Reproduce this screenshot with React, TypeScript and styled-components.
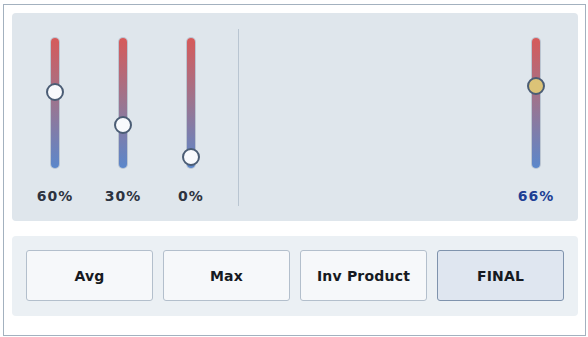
import React from "react";
import styled, { createGlobalStyle } from "styled-components";

const Global = createGlobalStyle`
  html, body { margin: 0; padding: 0; background: #ffffff; }
  body { font-family: "DejaVu Sans", Verdana, sans-serif; }
`;

const Frame = styled.div`
  box-sizing: border-box;
  margin: 4px 0 0 3px;
  width: 583px;
  height: 332px;
  border: 1px solid #a3b1bf;
  background: #ffffff;
  padding: 8px 7px 8px 8px;
  display: flex;
  flex-direction: column;
  gap: 15px;
`;

const SliderPanel = styled.div`
  box-sizing: border-box;
  height: 208px;
  background: #dfe6ec;
  border-radius: 4px;
  padding: 16px 18px 15px 19px;
  display: flex;
  align-items: stretch;
`;

const Group = styled.div`
  display: flex;
  gap: 20px;
`;

const Divider = styled.div`
  width: 1px;
  background: #b9c5d1;
  margin: 0 24px 0 23px;
`;

const RightArea = styled.div`
  flex: 1;
  display: flex;
  justify-content: flex-end;
`;

const Column = styled.div`
  width: 48px;
  display: flex;
  flex-direction: column;
  align-items: center;
  padding-top: 9px;
`;

const Track = styled.div`
  position: relative;
  box-sizing: border-box;
  width: 8px;
  height: 130px;
  border-radius: 4px;
  background: linear-gradient(to bottom, #d65a5a 0%, #9b7590 50%, #5b87cb 100%);
  box-shadow: 0 0 0 1px rgba(120, 135, 160, 0.35);
`;

const Thumb = styled.div<{ $accent?: boolean }>`
  position: absolute;
  left: 50%;
  box-sizing: border-box;
  width: 18px;
  height: 18px;
  margin-left: -9px;
  border-radius: 50%;
  border: 2px solid #4b5d75;
  background: ${(p) => (p.$accent ? "#dcc377" : "#f8fafd")};
`;

const Value = styled.div<{ $accent?: boolean }>`
  margin-top: 20px;
  font-family: "DejaVu Sans", Verdana, sans-serif;
  font-weight: 700;
  font-size: 14px;
  letter-spacing: 1px;
  line-height: 17px;
  color: ${(p) => (p.$accent ? "#1d3f94" : "#2d3340")};
  white-space: nowrap;
`;

const ButtonPanel = styled.div`
  box-sizing: border-box;
  height: 80px;
  background: #ebf0f4;
  border-radius: 4px;
  padding: 14px 13px 15px 14px;
  display: grid;
  grid-template-columns: repeat(4, 127px);
  gap: 10px;
`;

const Button = styled.button<{ $active?: boolean }>`
  box-sizing: border-box;
  height: 51px;
  border-radius: 3px;
  border: 1px solid ${(p) => (p.$active ? "#7f93ad" : "#b3bfcc")};
  background: ${(p) => (p.$active ? "#dfe6f0" : "#f6f8fa")};
  font-family: "DejaVu Sans", Verdana, sans-serif;
  font-weight: 700;
  font-size: 14px;
  letter-spacing: 0.2px;
  color: #161a22;
  padding: 0;
  cursor: pointer;
`;

type SliderProps = { value: number; accent?: boolean };

const Slider: React.FC<SliderProps> = ({ value, accent }) => (
  <Column>
    <Track>
      <Thumb $accent={accent} style={{ top: 2 + (1 - value / 100) * 108 }} />
    </Track>
    <Value $accent={accent}>{value}%</Value>
  </Column>
);

export default function App() {
  return (
    <>
      <Global />
      <Frame>
        <SliderPanel>
          <Group>
            <Slider value={60} />
            <Slider value={30} />
            <Slider value={0} />
          </Group>
          <Divider />
          <RightArea>
            <Slider value={66} accent />
          </RightArea>
        </SliderPanel>
        <ButtonPanel>
          <Button>Avg</Button>
          <Button>Max</Button>
          <Button>Inv Product</Button>
          <Button $active>FINAL</Button>
        </ButtonPanel>
      </Frame>
    </>
  );
}
